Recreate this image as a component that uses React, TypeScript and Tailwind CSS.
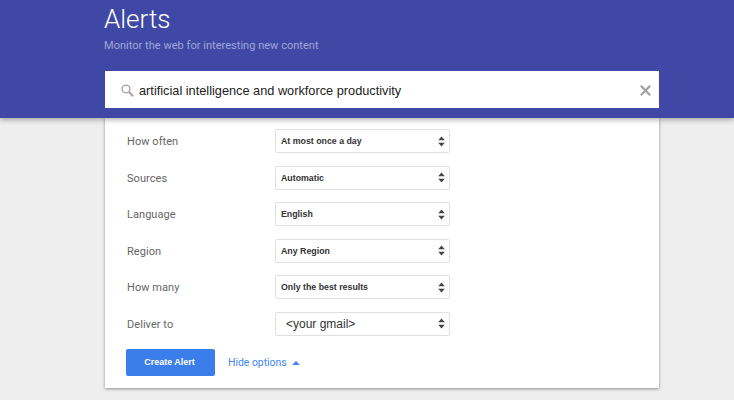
const OPTIONS = [
  { label: 'How often', value: 'At most once a day' },
  { label: 'Sources', value: 'Automatic' },
  { label: 'Language', value: 'English' },
  { label: 'Region', value: 'Any Region' },
  { label: 'How many', value: 'Only the best results' },
]

function Arrows() {
  return (
    <svg width="7" height="11" viewBox="0 0 7 11" className="shrink-0">
      <path d="M3.5 0.5 L6.8 4.3 H0.2 Z M3.5 10.5 L6.8 6.7 H0.2 Z" fill="#444" />
    </svg>
  )
}

function OptionRow({ label, children }: { label: string; children: React.ReactNode }) {
  return (
    <div className="flex items-center h-[24px]">
      <div className="w-[148px] pt-[3px] text-[11px] text-[#666] tracking-[0.05px]">{label}</div>
      <div className="w-[175px] h-[24px] flex items-center justify-between pl-[5px] pr-[4px] bg-white border border-[#e0e0e0] rounded-[2px]">
        {children}
        <Arrows />
      </div>
    </div>
  )
}

export default function App() {
  return (
    <div className="relative w-[734px] h-[400px] overflow-hidden bg-[#eeeeee] font-['Roboto','Liberation_Sans',sans-serif]">
      <header className="relative z-10 h-[118px] bg-[#3f49a5] pl-[105px] shadow-[0_2px_5px_rgba(0,0,0,0.3)]">
        <h1 className="-ml-[1px] pt-[2px] text-[26px] leading-[34px] font-light text-white">Alerts</h1>
        <p className="mt-[2px] -ml-[1px] text-[11px] leading-[16px] text-[#9fa5d9] tracking-[0.03px]">
          Monitor the web for interesting new content
        </p>
        <div className="mt-[17px] w-[554px] h-[37px] flex items-center bg-white pl-[16px] pr-[8px] pt-[2px]">
          <svg width="13" height="13" viewBox="0 0 13 13" fill="none" stroke="#a3a3a3" className="shrink-0">
            <circle cx="5" cy="5" r="3.9" strokeWidth="1.4" />
            <path d="M8 8 L12.2 12.2" strokeWidth="2" />
          </svg>
          <span className="ml-[5px] flex-1 text-[12.75px] text-[#222] font-['Liberation_Sans',sans-serif]">
            artificial intelligence and workforce productivity
          </span>
          <svg width="11" height="11" viewBox="0 0 11 11" stroke="#a0a0a0" strokeWidth="2.2">
            <path d="M0.8 0.8 L10.2 10.2 M10.2 0.8 L0.8 10.2" />
          </svg>
        </div>
      </header>

      <section className="ml-[105px] w-[554px] h-[270px] bg-white shadow-[0_1px_3px_rgba(0,0,0,0.4)] pl-[22px] pt-[11px]">
        <div className="flex flex-col gap-[12.5px]">
          {OPTIONS.map((o) => (
            <OptionRow key={o.label} label={o.label}>
              <span className="pt-[2px] text-[8.8px] font-bold text-[#333] font-['Liberation_Sans',sans-serif]">{o.value}</span>
            </OptionRow>
          ))}
          <OptionRow label="Deliver to">
            <span className="pl-[5px] text-[12px] text-[#333] font-['Liberation_Sans',sans-serif]">&lt;your gmail&gt;</span>
          </OptionRow>
        </div>
        <div className="mt-[13.5px] -ml-[1px] flex items-center">
          <button className="w-[89px] h-[27px] pr-[2px] bg-[#3b7de9] rounded-[2px] text-[9px] font-bold text-white font-['Liberation_Sans',sans-serif]">
            Create Alert
          </button>
          <span className="ml-[13px] text-[10.4px] text-[#4285f4]">Hide options</span>
          <svg width="8" height="4" viewBox="0 0 8 4" className="ml-[5px]">
            <path d="M4 0 L8 4 H0 Z" fill="#4285f4" />
          </svg>
        </div>
      </section>
    </div>
  )
}
